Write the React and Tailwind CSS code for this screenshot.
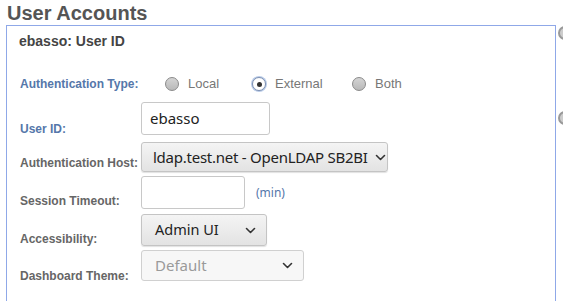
function Radio({ checked, label }) {
  return (
    <label className="flex items-center gap-[9px] text-[13px] text-[#777]">
      {checked ? (
        <span className="w-[14px] h-[14px] rounded-full border border-[#7c8fb0] bg-white flex items-center justify-center shadow-[0_0_0_1px_#b9cbe8]">
          <span className="w-[5px] h-[5px] rounded-full bg-[#333]" />
        </span>
      ) : (
        <span className="w-[14px] h-[14px] rounded-full border border-[#8a8a8a] bg-gradient-to-b from-[#d4d4d4] to-[#b9b9b9]" />
      )}
      <span>{label}</span>
    </label>
  );
}

function Chevron({ color = "#333" }) {
  return (
    <svg width="11" height="7" viewBox="0 0 11 7" fill="none" className="shrink-0">
      <path d="M1.5 1.5 L5.5 5.5 L9.5 1.5" stroke={color} strokeWidth="1.6" strokeLinecap="round" strokeLinejoin="round" />
    </svg>
  );
}

function Row({ label, blue, children, className = "", lb = "" }) {
  return (
    <div className={"flex items-end " + className}>
      <div
        className={
          "w-[121px] shrink-0 text-[12px] leading-[14px] font-bold " +
          lb +
          (blue ? " text-[#5577aa]" : " text-[#666]")
        }
      >
        {label}
      </div>
      {children}
    </div>
  );
}

export default function App() {
  const ctl = { fontFamily: '"Noto Sans", sans-serif' };
  return (
    <div className="w-[563px] h-[301px] overflow-hidden bg-white relative" style={{ fontFamily: '"Liberation Sans", Arial, sans-serif' }}>
      <h1 className="pl-[7px] pt-[1px] text-[20px] leading-[24px] font-bold text-[#555]">User Accounts</h1>
      <div className="ml-[6px] w-[550px] h-[300px] border border-[#8fa8e8] pl-[12px]">
        <div className="pt-[7px] text-[14px] leading-[16px] font-bold text-[#444]">ebasso: User ID</div>

        <div className="flex items-center pl-[1px] mt-[28px] h-[14px]">
          <div className="w-[145px] shrink-0 text-[12px] font-bold text-[#5577aa]">Authentication Type:</div>
          <div className="flex items-center">
            <div className="w-[87px]"><Radio label="Local" /></div>
            <div className="w-[100px]"><Radio checked label="External" /></div>
            <Radio label="Both" />
          </div>
        </div>

        <div className="pl-[1px] mt-[11px] flex flex-col">
          <Row label="User ID:" blue lb="-mb-[1px]">
            <div className="w-[129px] h-[33px] border border-[#c8c8c8] rounded-[3px] flex items-center px-[8px] text-[15px] text-[#222]" style={ctl}>
              ebasso
            </div>
          </Row>
          <Row label="Authentication Host:" className="mt-[7px]" lb="mb-[2px]">
            <div className="w-[247px] h-[30px] border border-[#c4c4c4] rounded-[3px] bg-gradient-to-b from-[#f4f4f4] to-[#e3e3e3] flex items-center pl-[11px] gap-[7px] text-[15px] tracking-[-0.25px] text-[#222] shadow-[0_1px_1px_rgba(0,0,0,0.12)] overflow-hidden" style={ctl}>
              <span className="whitespace-nowrap">ldap.test.net - OpenLDAP SB2BI</span>
              <Chevron />
            </div>
          </Row>
          <Row label="Session Timeout:" className="mt-[4px]" lb="mb-[1px]">
            <div className="flex items-center">
              <div className="w-[104px] h-[33px] border border-[#c8c8c8] rounded-[3px]" />
              <span className="ml-[11px] text-[12px] text-[#5577aa]" style={ctl}>(min)</span>
            </div>
          </Row>
          <Row label="Accessibility:" className="mt-[5px]">
            <div className="w-[126px] h-[32px] border border-[#c4c4c4] rounded-[3px] bg-gradient-to-b from-[#f4f4f4] to-[#e3e3e3] flex items-center justify-between pl-[13px] pr-[10px] text-[14.5px] text-[#222] shadow-[0_1px_1px_rgba(0,0,0,0.12)]" style={ctl}>
              <span>Admin UI</span>
              <Chevron />
            </div>
          </Row>
          <Row label="Dashboard Theme:" className="mt-[4px]" lb="-mb-[2px]">
            <div className="w-[163px] h-[31px] border border-[#d0d0d0] rounded-[3px] bg-[#f7f7f7] flex items-center justify-between pl-[13px] pr-[10px] text-[15px] text-[#9a9a9a]" style={ctl}>
              <span>Default</span>
              <Chevron color="#333" />
            </div>
          </Row>
        </div>
      </div>
      <span className="absolute left-[558px] top-[26px] w-[14px] h-[14px] rounded-full border-2 border-[#999] bg-[#ccc]" />
      <span className="absolute left-[558px] top-[111px] w-[14px] h-[14px] rounded-full border-2 border-[#999] bg-[#ccc]" />
    </div>
  );
}
